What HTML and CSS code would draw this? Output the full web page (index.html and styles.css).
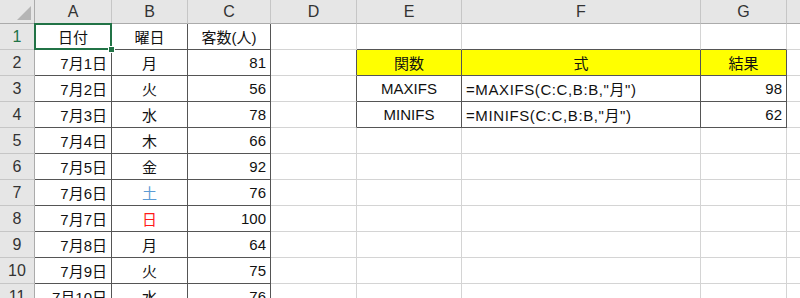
FILE: index.html
```html
<!DOCTYPE html>
<html lang="ja">
<head>
<meta charset="utf-8">
<title>Sheet</title>
<link rel="stylesheet" href="styles.css">
</head>
<body>
<div class="sheet">
  <div class="h corner"><span class="tri"></span></div>
  <div class="h">A</div><div class="h">B</div><div class="h">C</div><div class="h">D</div><div class="h">E</div><div class="h">F</div><div class="h">G</div><div class="h end"></div>

  <div class="rh sel">1</div>
  <div class="c b m active">日付</div><div class="c b m">曜日</div><div class="c b m">客数(人)</div><div class="c"></div><div class="c bb"></div><div class="c bb"></div><div class="c bb"></div><div class="c end"></div>

  <div class="rh">2</div>
  <div class="c b r">7月1日</div><div class="c b m">月</div><div class="c b r">81</div><div class="c br"></div><div class="c b m y">関数</div><div class="c b m y">式</div><div class="c b m y">結果</div><div class="c end"></div>

  <div class="rh">3</div>
  <div class="c b r">7月2日</div><div class="c b m">火</div><div class="c b r">56</div><div class="c br"></div><div class="c b m">MAXIFS</div><div class="c b l">=MAXIFS(C:C,B:B,"月")</div><div class="c b r">98</div><div class="c end"></div>

  <div class="rh">4</div>
  <div class="c b r">7月3日</div><div class="c b m">水</div><div class="c b r">78</div><div class="c br"></div><div class="c b m">MINIFS</div><div class="c b l">=MINIFS(C:C,B:B,"月")</div><div class="c b r">62</div><div class="c end"></div>

  <div class="rh">5</div>
  <div class="c b r">7月4日</div><div class="c b m">木</div><div class="c b r">66</div><div class="c"></div><div class="c"></div><div class="c"></div><div class="c"></div><div class="c end"></div>

  <div class="rh">6</div>
  <div class="c b r">7月5日</div><div class="c b m">金</div><div class="c b r">92</div><div class="c"></div><div class="c"></div><div class="c"></div><div class="c"></div><div class="c end"></div>

  <div class="rh">7</div>
  <div class="c b r">7月6日</div><div class="c b m sat">土</div><div class="c b r">76</div><div class="c"></div><div class="c"></div><div class="c"></div><div class="c"></div><div class="c end"></div>

  <div class="rh">8</div>
  <div class="c b r">7月7日</div><div class="c b m sun">日</div><div class="c b r">100</div><div class="c"></div><div class="c"></div><div class="c"></div><div class="c"></div><div class="c end"></div>

  <div class="rh">9</div>
  <div class="c b r">7月8日</div><div class="c b m">月</div><div class="c b r">64</div><div class="c"></div><div class="c"></div><div class="c"></div><div class="c"></div><div class="c end"></div>

  <div class="rh">10</div>
  <div class="c b r">7月9日</div><div class="c b m">火</div><div class="c b r">75</div><div class="c"></div><div class="c"></div><div class="c"></div><div class="c"></div><div class="c end"></div>

  <div class="rh">11</div>
  <div class="c b r">7月10日</div><div class="c b m">水</div><div class="c b r">76</div><div class="c"></div><div class="c"></div><div class="c"></div><div class="c"></div><div class="c end"></div>
</div>
</body>
</html>
```

FILE: styles.css
```css
html, body {
  margin: 0;
  padding: 0;
  background: #fff;
  overflow: hidden;
  height: 298px;
}

.sheet {
  display: grid;
  grid-template-columns: 35px 77px 76px 83px 86px 105px 239px 86px 1fr;
  grid-template-rows: 24px repeat(11, 26px);
  width: 800px;
  font-family: "Liberation Sans", "Noto Sans CJK JP", sans-serif;
  font-size: 15px;
  color: #111;
}

.sheet > div {
  box-sizing: border-box;
  display: flex;
  align-items: center;
  white-space: nowrap;
  overflow: hidden;
}

.h {
  background: #e6e6e6;
  border-right: 1px solid #c6c6c6;
  border-bottom: 1px solid #ababab;
  justify-content: center;
  color: #333;
  font-size: 16px;
  padding-top: 1px;
}

.h.end {
  border-right: none;
}

.corner {
  position: relative;
  border-right: 1px solid #ababab;
}

.tri {
  position: absolute;
  right: 3px;
  bottom: 3px;
  width: 0;
  height: 0;
  border-left: 14px solid transparent;
  border-bottom: 14px solid #b5b5b5;
}

.rh {
  background: #e6e6e6;
  border-right: 1px solid #ababab;
  border-bottom: 1px solid #c6c6c6;
  justify-content: center;
  color: #333;
  font-size: 16px;
}

.rh.sel {
  color: #217346;
}

.c {
  border-right: 1px solid #d4d4d4;
  border-bottom: 1px solid #d4d4d4;
  padding: 0 4px;
}

.c.end {
  border-right: none;
}

.c.b {
  border-right-color: #555;
  border-bottom-color: #555;
}

.c.br {
  border-right-color: #555;
}

.c.bb {
  border-bottom-color: #555;
}

.m { justify-content: center; }
.r { justify-content: flex-end; }
.l {
  justify-content: flex-start;
  letter-spacing: 0.6px;
}

.y { background: #ffff00; }

.sat { color: #5b9bd5; }
.sun { color: #ff1a1a; }

.active {
  position: relative;
  overflow: visible !important;
}

.active::after {
  content: "";
  position: absolute;
  left: -1px;
  top: -1px;
  right: -1px;
  bottom: -1px;
  border: 2px solid #217346;
  pointer-events: none;
}

.active::before {
  content: "";
  position: absolute;
  right: -4px;
  bottom: -4px;
  width: 5px;
  height: 5px;
  background: #217346;
  border: 1px solid #fff;
  z-index: 2;
}
```
